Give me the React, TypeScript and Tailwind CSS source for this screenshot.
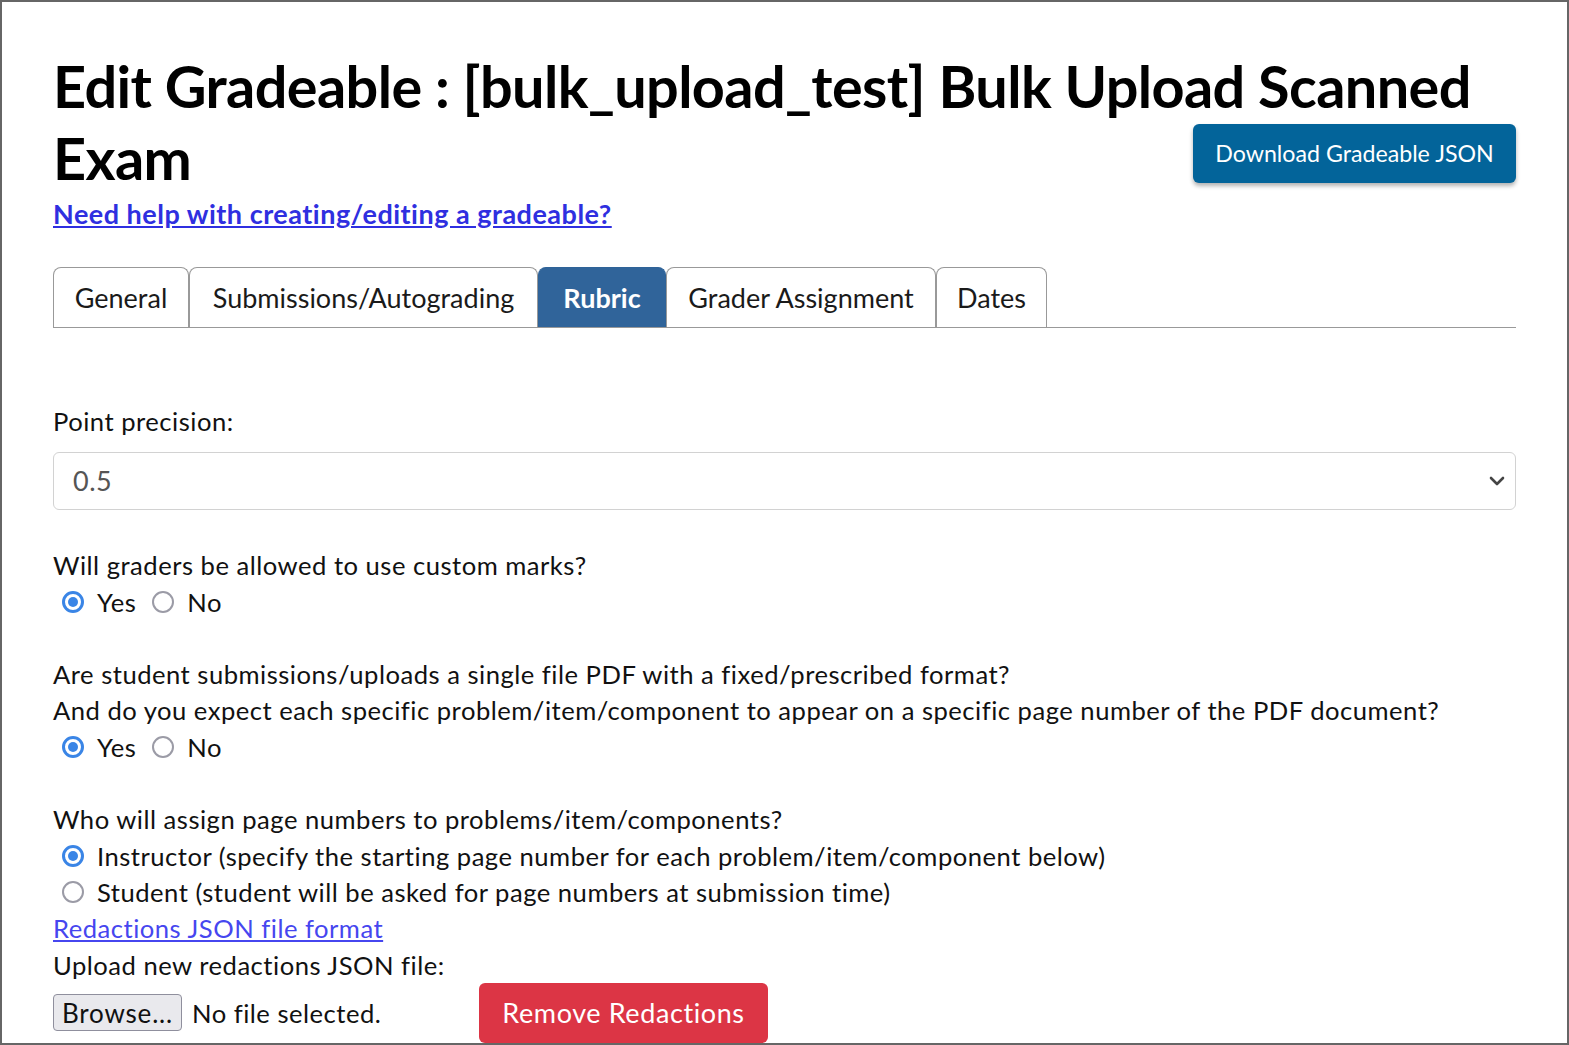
import React from "react";

const tabs = [
  { label: "General", w: "w-[136px]" },
  { label: "Submissions/Autograding", w: "w-[349px]" },
  { label: "Rubric", w: "w-[128px]", active: true },
  { label: "Grader Assignment", w: "w-[270px]" },
  { label: "Dates", w: "w-[111px]" },
];

function Radio({ checked }: { checked?: boolean }) {
  if (checked) {
    return (
      <span className="flex h-[22px] w-[22px] shrink-0 items-center justify-center rounded-full border-[3px] border-[#3a85e6] bg-white">
        <span className="h-[10px] w-[10px] rounded-full bg-[#3a85e6]" />
      </span>
    );
  }
  return <span className="h-[22px] w-[22px] shrink-0 rounded-full border-2 border-[#9b9ba6] bg-white" />;
}

function Option({ checked, label, className }: { checked?: boolean; label: string; className?: string }) {
  return (
    <label className={"flex items-center " + (className ?? "")}>
      <Radio checked={checked} />
      <span className="ml-[13px]">{label}</span>
    </label>
  );
}

export default function App() {
  return (
    <div className="box-border h-[1045px] w-full overflow-hidden border-2 border-[#666] bg-white font-['Lato',sans-serif] text-[25.6px] leading-[36.3px] tracking-[0.5px] text-[#111]">
      <div className="px-[51px] pt-[48px]">
        <h1 className="text-[57.6px] font-bold leading-[72px] tracking-[-0.6px] text-black">
          Edit Gradeable : [bulk_upload_test] Bulk Upload Scanned Exam
        </h1>
        <div className="-mt-[70px] flex justify-end">
          <button className="flex h-[59px] w-[323px] items-center justify-center rounded-[6px] bg-[#03649a] text-[23.2px] tracking-normal text-white shadow-[0_3px_4px_rgba(0,0,0,0.3)]">
            Download Gradeable JSON
          </button>
        </div>
        <div className="mt-[13px] leading-[36px]">
          <a href="#" className="text-[27px] font-bold text-[#2f2fe0] underline">
            Need help with creating/editing a gradeable?
          </a>
        </div>

        <div className="mt-[36px] flex h-[60px] items-end border-b border-[#999] tracking-normal">
          {tabs.map((t) => (
            <div
              key={t.label}
              className={
                "flex h-[60px] items-center justify-center rounded-t-[8px] border border-b-0 pt-[2px] text-[27px] " +
                t.w +
                (t.active
                  ? " border-[#2f6398] bg-[#30649a] font-bold text-white"
                  : " border-[#999] bg-white text-[#1a1a1a]")
              }
            >
              {t.label}
            </div>
          ))}
        </div>

        <div className="mt-[75px]">Point precision:</div>
        <div className="mt-[13px] flex h-[58px] items-center justify-between rounded-[6px] border border-[#d2d2d2] pl-[19px] pr-[10px]">
          <span className="text-[27px] text-[#555]">0.5</span>
          <svg width="16" height="10" viewBox="0 0 16 10">
            <path d="M2 2 L8 8 L14 2" fill="none" stroke="#444" strokeWidth="2.6" strokeLinecap="round" strokeLinejoin="round" />
          </svg>
        </div>

        <div className="mt-[37px]">Will graders be allowed to use custom marks?</div>
        <div className="flex h-[36.3px] items-center pl-[9px]">
          <Option checked label="Yes" />
          <Option label="No" className="ml-[16px]" />
        </div>

        <div className="mt-[36.3px]">Are student submissions/uploads a single file PDF with a fixed/prescribed format?</div>
        <div>And do you expect each specific problem/item/component to appear on a specific page number of the PDF document?</div>
        <div className="flex h-[36.3px] items-center pl-[9px]">
          <Option checked label="Yes" />
          <Option label="No" className="ml-[16px]" />
        </div>

        <div className="mt-[36.3px]">Who will assign page numbers to problems/item/components?</div>
        <div className="flex h-[36.3px] items-center pl-[9px]">
          <Option checked label="Instructor (specify the starting page number for each problem/item/component below)" />
        </div>
        <div className="flex h-[36.3px] items-center pl-[9px]">
          <Option label="Student (student will be asked for page numbers at submission time)" />
        </div>
        <div>
          <a href="#" className="text-[#4646ef] underline">
            Redactions JSON file format
          </a>
        </div>
        <div>Upload new redactions JSON file:</div>
        <div className="flex h-[60px] items-center">
          <div className="flex w-[426px] items-center">
            <button className="flex h-[37px] w-[129px] items-center justify-center rounded-[4px] border border-[#8f8f9d] bg-[#e9e9ed] text-[26px] tracking-[0.8px] text-[#111]">
              Browse...
            </button>
            <span className="ml-[10px]">No file selected.</span>
          </div>
          <button className="flex h-[60px] w-[289px] items-center justify-center rounded-[6px] bg-[#dc3545] text-[27px] tracking-[0.6px] text-white">
            Remove Redactions
          </button>
        </div>
      </div>
    </div>
  );
}
